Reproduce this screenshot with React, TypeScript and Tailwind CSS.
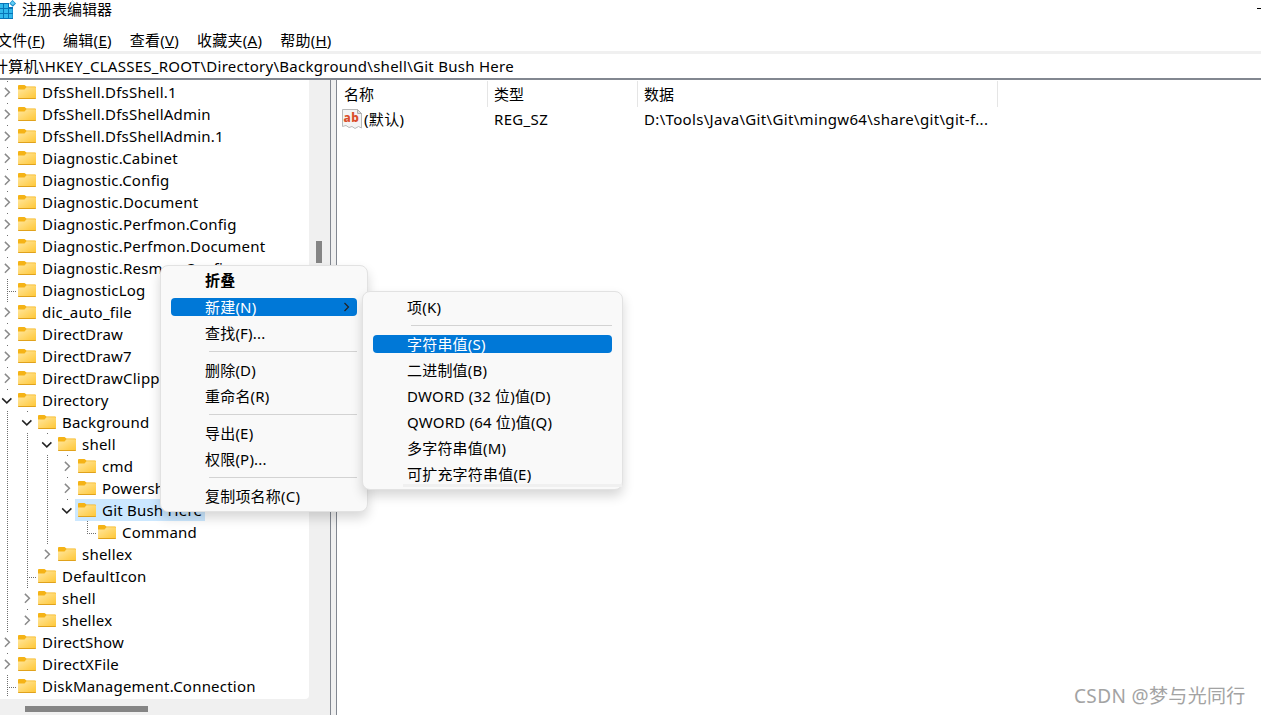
import { clsx } from "clsx";

type Guide = "line" | "none";

type TreeNode = {
  label: string;
  guides?: Guide[];
  state: "open" | "closed" | "leaf";
  last?: boolean;
  selected?: boolean;
};

type MenuEntry = {
  label?: string;
  bold?: boolean;
  active?: boolean;
  submenu?: boolean;
};

const nodes: TreeNode[] = [
  { label: "DfsShell.DfsShell.1", state: "closed" },
  { label: "DfsShell.DfsShellAdmin", state: "closed" },
  { label: "DfsShell.DfsShellAdmin.1", state: "closed" },
  { label: "Diagnostic.Cabinet", state: "closed" },
  { label: "Diagnostic.Config", state: "closed" },
  { label: "Diagnostic.Document", state: "closed" },
  { label: "Diagnostic.Perfmon.Config", state: "closed" },
  { label: "Diagnostic.Perfmon.Document", state: "closed" },
  { label: "Diagnostic.Resmon.Config", state: "closed" },
  { label: "DiagnosticLog", state: "leaf" },
  { label: "dic_auto_file", state: "closed" },
  { label: "DirectDraw", state: "closed" },
  { label: "DirectDraw7", state: "closed" },
  { label: "DirectDrawClipper", state: "closed" },
  { label: "Directory", state: "open" },
  { label: "Background", guides: ["line"], state: "open" },
  { label: "shell", guides: ["line", "line"], state: "open" },
  { label: "cmd", guides: ["line", "line", "line"], state: "closed" },
  { label: "Powershell", guides: ["line", "line", "line"], state: "closed" },
  {
    label: "Git Bush Here",
    guides: ["line", "line", "line"],
    state: "open",
    last: true,
    selected: true,
  },
  {
    label: "Command",
    guides: ["line", "line", "line", "none"],
    state: "leaf",
    last: true,
  },
  { label: "shellex", guides: ["line", "line"], state: "closed", last: true },
  { label: "DefaultIcon", guides: ["line"], state: "leaf" },
  { label: "shell", guides: ["line"], state: "closed" },
  { label: "shellex", guides: ["line"], state: "closed", last: true },
  { label: "DirectShow", state: "closed" },
  { label: "DirectXFile", state: "closed" },
  { label: "DiskManagement.Connection", state: "leaf" },
];

const menus = [
  { name: "文件", key: "F" },
  { name: "编辑", key: "E" },
  { name: "查看", key: "V" },
  { name: "收藏夹", key: "A" },
  { name: "帮助", key: "H" },
];

const contextMenu: MenuEntry[] = [
  { label: "折叠", bold: true },
  { label: "新建(N)", active: true, submenu: true },
  { label: "查找(F)..." },
  {},
  { label: "删除(D)" },
  { label: "重命名(R)" },
  {},
  { label: "导出(E)" },
  { label: "权限(P)..." },
  {},
  { label: "复制项名称(C)" },
];

const newMenu: MenuEntry[] = [
  { label: "项(K)" },
  {},
  { label: "字符串值(S)", active: true },
  { label: "二进制值(B)" },
  { label: "DWORD (32 位)值(D)" },
  { label: "QWORD (64 位)值(Q)" },
  { label: "多字符串值(M)" },
  { label: "可扩充字符串值(E)" },
];

const vDots =
  "w-px bg-[repeating-linear-gradient(to_bottom,#6f6f6f_0_1px,transparent_1px_2px)]";
const hDots =
  "h-px bg-[repeating-linear-gradient(to_right,#6f6f6f_0_1px,transparent_1px_2px)]";

function Folder() {
  return (
    <svg width="18" height="14" viewBox="0 0 18 14" className="shrink-0">
      <defs>
        <linearGradient id="folder" x1="0" y1="0" x2="1" y2="1">
          <stop offset="0" stopColor="#ffe8a3" />
          <stop offset="1" stopColor="#ffc736" />
        </linearGradient>
      </defs>
      <path d="M0 1Q0 0 1 0H6.5L8.5 1.5H17Q18 1.5 18 2.5V5H0Z" fill="#f5b316" />
      <path
        d="M0 4.5H6.5L8.5 2.3H17.3Q18 2.3 18 3V13.3H0Z"
        fill="url(#folder)"
      />
      <path d="M0 13H18V13.3Q18 14 17.3 14H.7Q0 14 0 13.3Z" fill="#e0a21c" />
    </svg>
  );
}

function Expander({ open }: { open: boolean }) {
  return (
    <svg
      width="12"
      height="12"
      viewBox="0 0 12 12"
      fill="none"
      className="mt-px ml-1"
    >
      {open ? (
        <path d="M1.2 4.4L5.8 8.9L10.4 4.4" stroke="#222" strokeWidth="1.5" />
      ) : (
        <path d="M3.9 1.9L8.4 6.3L3.9 10.7" stroke="#8a8a8a" strokeWidth="1.5" />
      )}
    </svg>
  );
}

function TreeRow({ node }: { node: TreeNode }) {
  return (
    <div className="-ml-[3px] flex h-[22px] items-center">
      {(node.guides ?? []).map((guide, i) => (
        <div key={i} className="flex h-[22px] w-5 shrink-0 pl-2.5">
          {guide === "line" && <div className={vDots} />}
        </div>
      ))}
      {node.state === "leaf" ? (
        <div className="flex h-[22px] w-5 shrink-0 pl-2.5">
          <div className={clsx(vDots, node.last ? "h-[13px]" : "h-[22px]")} />
          <div className={clsx(hDots, "mt-3 ml-px w-2")} />
        </div>
      ) : (
        <div className="h-[22px] w-5 shrink-0">
          <div className="mb-1 ml-2.5 h-px w-px bg-[#6f6f6f]" />
          <Expander open={node.state === "open"} />
        </div>
      )}
      <div
        className={clsx(
          "flex h-[22px] items-center gap-1.5 whitespace-nowrap",
          node.selected ? "-ml-0.5 bg-[#cce8ff] pr-[3px] pl-[3px]" : "pl-px"
        )}
      >
        <Folder />
        <span className="leading-[22px] tracking-[0.22px]">{node.label}</span>
      </div>
    </div>
  );
}

function MenuPanel({
  entries,
  className,
}: {
  entries: MenuEntry[];
  className: string;
}) {
  return (
    <div
      className={clsx(
        "absolute rounded-lg border border-[#e2e2e2] bg-[#f9f9f9] py-0.5 tracking-[0.2px] shadow-[0_6px_12px_rgba(0,0,0,0.16)]",
        className
      )}
    >
      {entries.map((entry, i) =>
        entry.label ? (
          <div key={i} className="flex h-[26px] items-center px-2.5">
            <div
              className={clsx(
                "flex h-[18px] flex-1 items-center justify-between rounded pr-1.5 pl-[34px] whitespace-nowrap",
                entry.active && "bg-[#0078d7] text-white",
                entry.bold ? "pb-0.5 leading-4 font-bold" : "leading-[18px]"
              )}
            >
              <span>{entry.label}</span>
              {entry.submenu && (
                <svg width="9" height="10" viewBox="0 0 9 10" fill="none">
                  <path d="M2.5 1L6.5 5L2.5 9" stroke="#222" strokeWidth="1.2" />
                </svg>
              )}
            </div>
          </div>
        ) : (
          <div key={i} className="flex h-[11px] items-center pr-2.5 pl-12">
            <div className="h-px flex-1 bg-[#d3d3d3]" />
          </div>
        )
      )}
    </div>
  );
}

function AppIcon() {
  return (
    <svg width="16" height="20" viewBox="0 0 16 20">
      <path d="M0 3H9V7H13V19H0Z" fill="#0874b8" />
      <path
        d="M0 4H3V8H0ZM4 4H8V8H4ZM0 9H3V13H0ZM4 9H8V13H4ZM9 9H12.5V13H9ZM0 14H3V18H0ZM4 14H8V18H4ZM9 14H12.5V18H9Z"
        fill="#32b8ec"
      />
      <path d="M12.5 0L16 3.4L12.8 6.8L9.3 3.4Z" fill="#1689c8" />
      <path d="M12.5 1L15 3.3L12.7 5.2L10.4 3.2Z" fill="#62cdf4" />
    </svg>
  );
}

function StringIcon() {
  return (
    <svg width="20" height="20" viewBox="0 0 20 20">
      <path
        d="M.5 .5H15.5L19.5 4.5V19L16.5 17.5L13 19.5L10 17.5L7 18.5L4 16.5L.5 17.5Z"
        fill="#f4f4f4"
        stroke="#b9b9b9"
      />
      <path d="M15.5 .5V4.5H19.5Z" fill="#dcdcdc" stroke="#b0b0b0" />
      <text
        x="1.6"
        y="13"
        fontFamily="Noto Sans, sans-serif"
        fontSize="12.5"
        fontWeight="800"
        textLength="15.5"
        lengthAdjust="spacingAndGlyphs"
        fill="#d94f2c"
      >
        ab
      </text>
    </svg>
  );
}

export default function App() {
  return (
    <div className="relative flex h-[715px] w-[1261px] flex-col overflow-hidden bg-white font-['Noto_Sans','Noto_Sans_CJK_SC',sans-serif] text-[15px] text-black">
      <header className="flex h-5 shrink-0 items-center justify-between">
        <div className="flex h-5 items-center gap-1.5">
          <AppIcon />
          <span className="mb-0.5 leading-5">注册表编辑器</span>
        </div>
        <div className="mb-[3px] h-px w-1 bg-black" />
      </header>

      <nav className="-ml-[3px] flex h-[31px] shrink-0 items-center gap-[18px] pt-2 leading-5 tracking-[0.25px] whitespace-nowrap">
        {menus.map((menu) => (
          <span key={menu.key}>
            {menu.name}(<span className="underline">{menu.key}</span>)
          </span>
        ))}
      </nav>
      <div className="h-[3px] shrink-0 bg-[#f0f0f0]" />

      <div className="-ml-[7px] h-6 shrink-0 leading-6 tracking-[0.27px] whitespace-nowrap">
        计算机\HKEY_CLASSES_ROOT\Directory\Background\shell\Git Bush Here
      </div>
      <div className="h-0.5 w-full shrink-0 bg-[#828790]" />

      <main className="flex min-h-0 flex-1">
        <aside className="flex w-[331px] shrink-0 flex-col border-r border-[#828790] bg-[#f0f0f0]">
          <div className="flex h-[619px]">
            <div className="w-[309px] overflow-hidden rounded-br-sm bg-white pt-px">
              {nodes.map((node, i) => (
                <TreeRow key={i} node={node} />
              ))}
            </div>
            <div className="flex-1 pt-[161px] pl-[7px]">
              <div className="h-[22px] w-1.5 bg-[#858585]" />
            </div>
          </div>
          <div className="pt-[7px] pl-[25px]">
            <div className="h-1.5 w-[123px] bg-[#858585]" />
          </div>
        </aside>
        <div className="w-[5px] shrink-0 bg-[#f0f0f0]" />

        <section className="flex-1 border-l border-[#828790] pt-px whitespace-nowrap">
          <div className="grid h-[26px] w-[661px] grid-cols-[151px_150px_360px] leading-[26px]">
            <div className="border-r border-[#e5e5e5] pl-[7px]">名称</div>
            <div className="border-r border-[#e5e5e5] pl-1.5">类型</div>
            <div className="border-r border-[#e5e5e5] pl-1.5">数据</div>
          </div>
          <div className="grid h-6 w-[661px] grid-cols-[151px_150px_360px] items-center tracking-[0.33px]">
            <div className="flex items-center gap-0.5 pl-[5px]">
              <StringIcon />
              <span className="leading-6">(默认)</span>
            </div>
            <div className="pl-1.5">REG_SZ</div>
            <div className="pl-1.5">
              D:\Tools\Java\Git\Git\mingw64\share\git\git-f...
            </div>
          </div>
        </section>
      </main>

      <MenuPanel entries={contextMenu} className="top-[265px] left-[160px] w-[208px]" />
      <MenuPanel entries={newMenu} className="top-[291px] left-[362px] w-[261px]" />
      <div className="absolute top-[484px] left-[403px] h-[3px] w-[219px] bg-[#f0f0f0]" />

      <div className="absolute top-[682px] left-[1074px] text-[19px] leading-7 tracking-[0.36px] whitespace-nowrap text-[#a3a3a3]">
        CSDN @梦与光同行
      </div>
    </div>
  );
}
